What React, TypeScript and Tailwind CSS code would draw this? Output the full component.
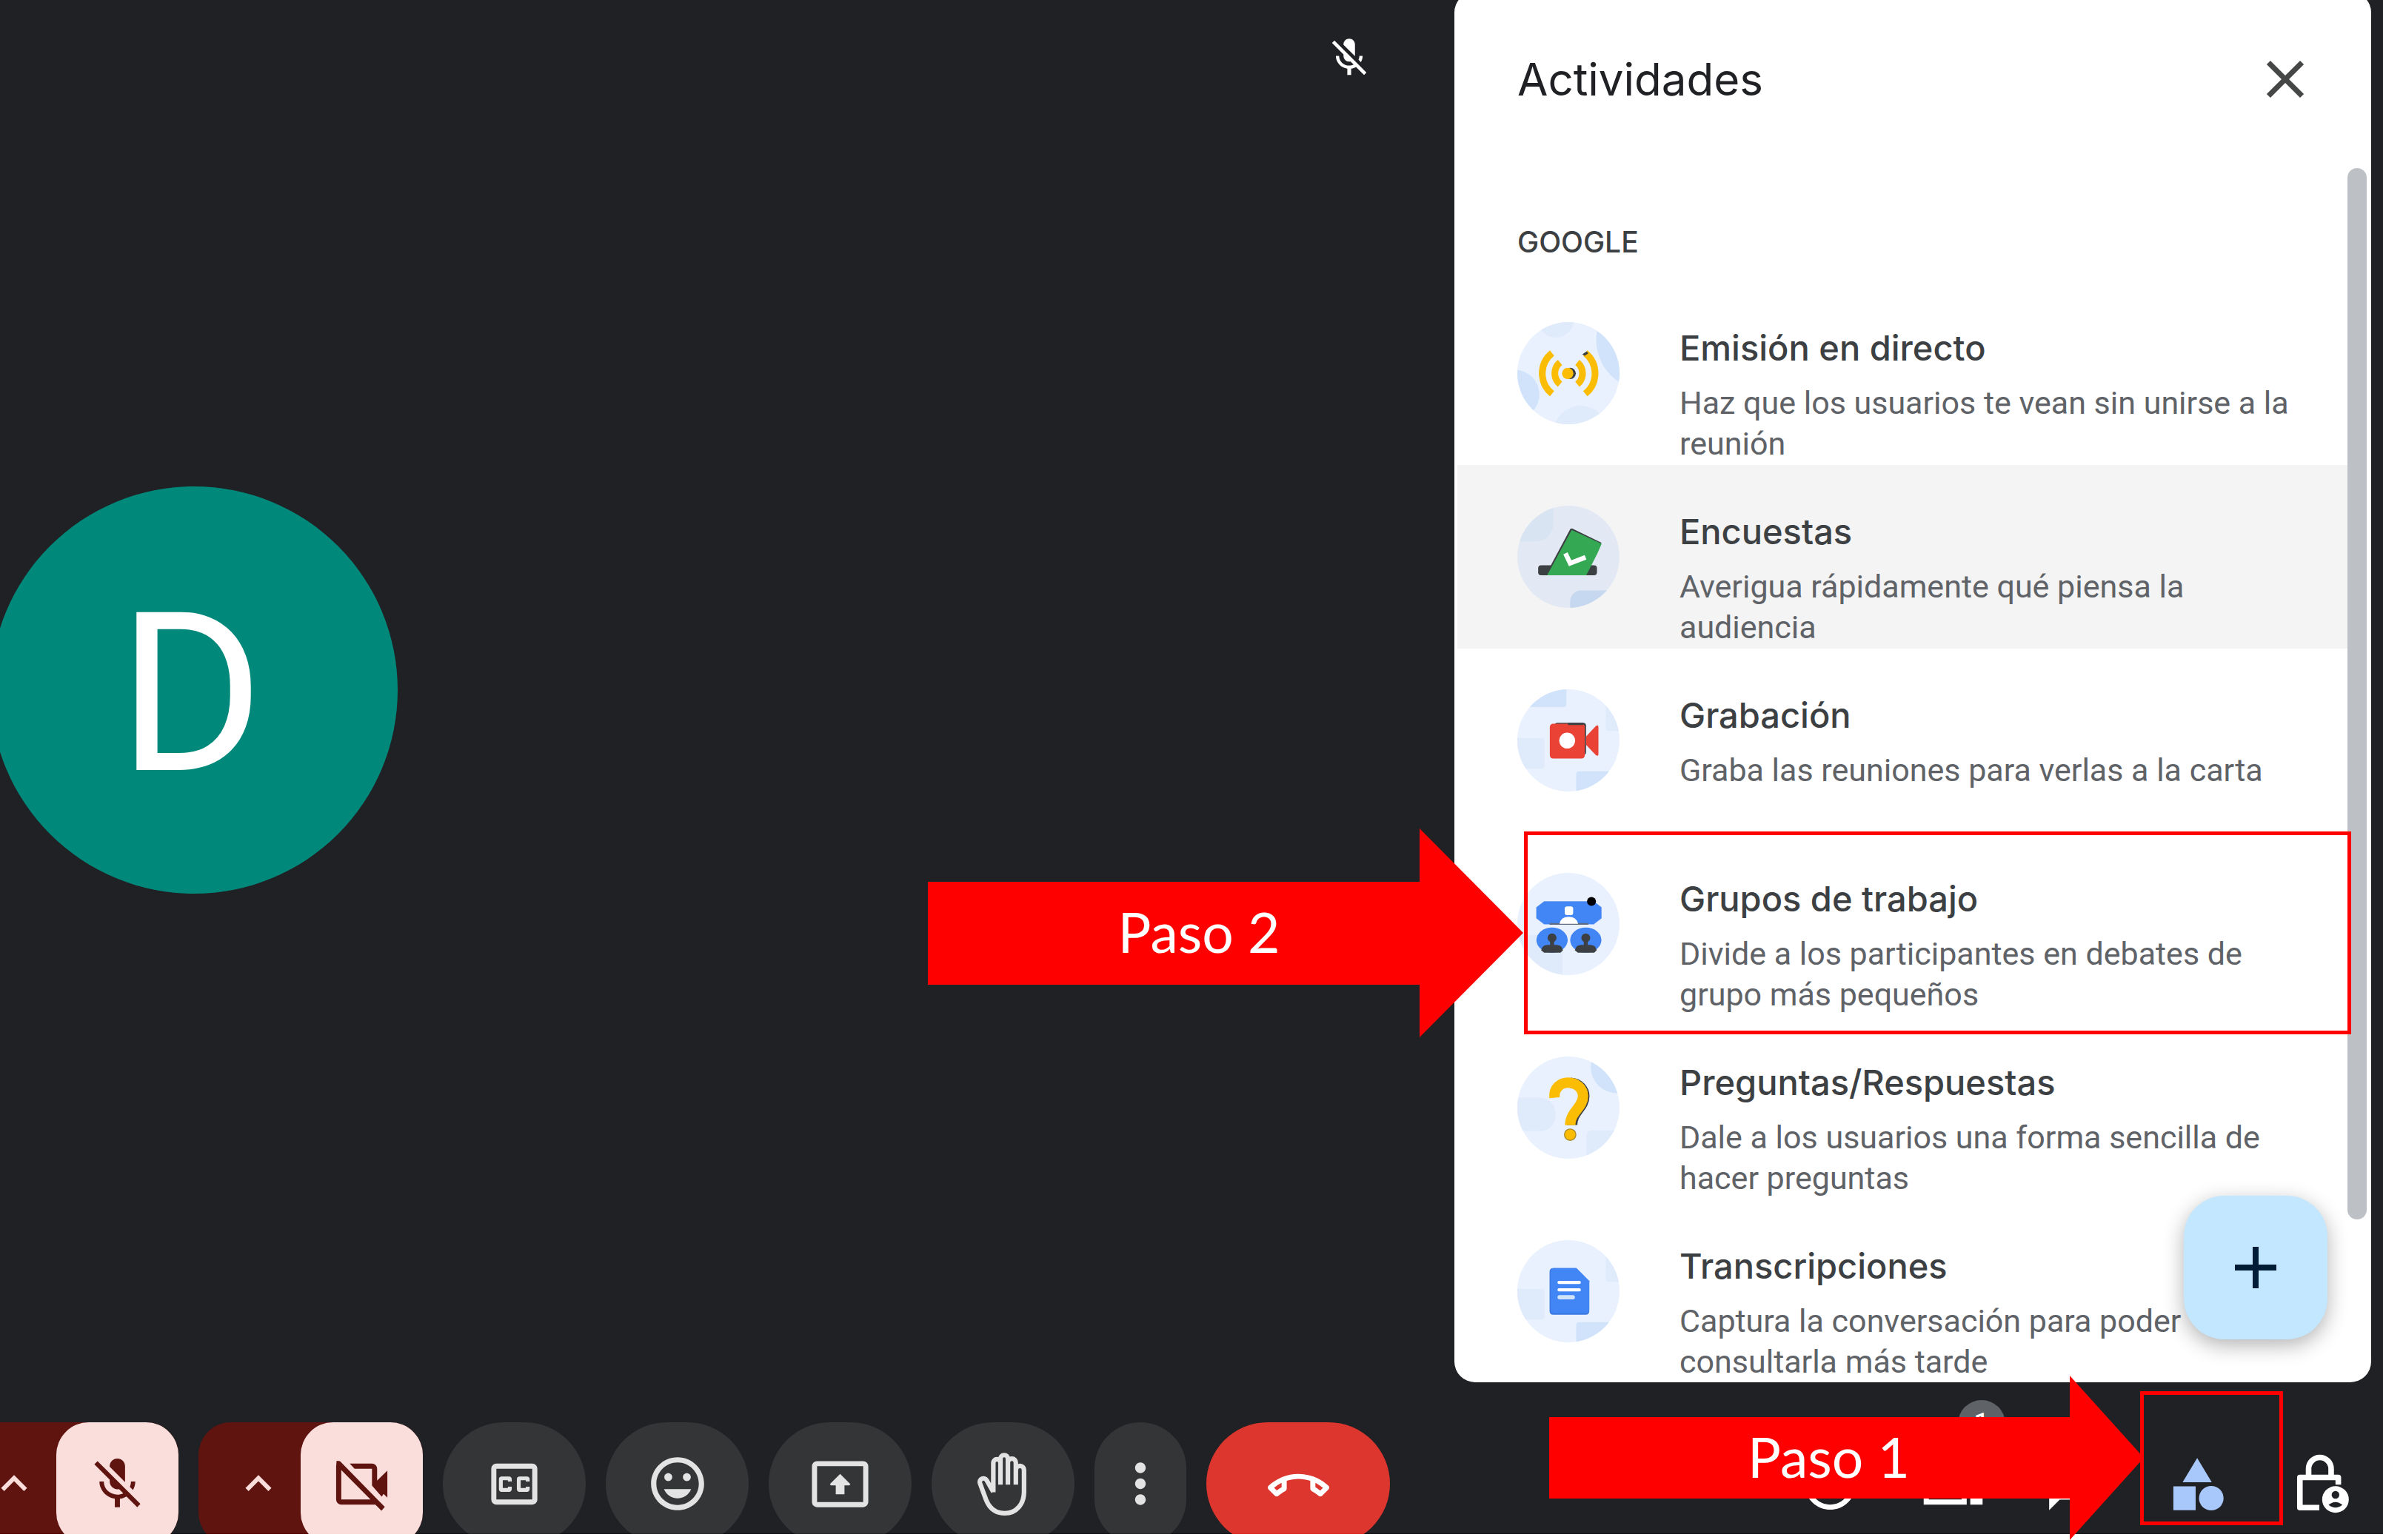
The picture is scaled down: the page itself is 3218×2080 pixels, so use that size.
import type { ReactNode } from "react";
import {
  MdMicOff,
  MdKeyboardArrowUp,
  MdOutlineClosedCaption,
  MdMood,
  MdMoreVert,
  MdClose,
  MdAdd,
  MdOutlineInfo,
  MdOutlineChat,
} from "react-icons/md";

/* ---------- Activity illustrations ---------- */

function Disc({ id, base = "#e9f1fe", children }: { id: string; base?: string; children: ReactNode }) {
  return (
    <svg viewBox="0 0 412 412" className="size-[138px] shrink-0" aria-hidden="true">
      <clipPath id={id}>
        <circle cx="206" cy="206" r="206" />
      </clipPath>
      <g clipPath={`url(#${id})`}>
        <rect width="412" height="412" fill={base} />
        {children}
      </g>
    </svg>
  );
}

function LiveIcon() {
  return (
    <Disc id="disc-live">
      <circle cx="155" cy="-12" r="74" fill="#dfeafb" />
      <circle cx="520" cy="72" r="202" fill="#d0e3fa" />
      <circle cx="-10" cy="292" r="99" fill="#d0e3fa" />
      <circle cx="255" cy="447" r="110" fill="#dfeafb" />
      <g fill="none" stroke="#fbbc04" strokeWidth="27">
        <path d="M140 125a105 105 0 0 0 0 164" />
        <path d="M172 163a57 57 0 0 0 0 88" />
        <path d="M242 163a57 57 0 0 1 0 88" />
        <path d="M274 125a105 105 0 0 1 0 164" />
      </g>
      <path d="M262 130l18-12 6 8-14 10z" fill="#3c4043" />
      <circle cx="213" cy="207" r="23" fill="#3c4043" />
      <circle cx="203" cy="207" r="23" fill="#fbbc04" />
    </Disc>
  );
}

function PollIcon() {
  return (
    <Disc id="disc-poll" base="#e3e9f4">
      <rect x="-60" y="-60" width="205" height="205" rx="70" fill="#d8e4f2" />
      <rect x="213" y="342" width="260" height="160" rx="44" fill="#c6d8f0" />
      <rect x="84" y="240" width="237" height="41" rx="12" fill="#3c4043" />
      <path d="M114 280l100-187 7-1 118 57-4 8-62 123z" fill="#3c4043" />
      <path d="M120 281L219 98l121 56-18 40-44 87z" fill="#34a853" />
      <path d="M194 192l19 40 62-24" fill="none" stroke="#fff" strokeWidth="19" />
    </Disc>
  );
}

function RectBlobs() {
  return (
    <>
      <rect x="357" y="50" width="120" height="118" rx="12" fill="#dfeafb" />
      <rect x="-40" y="197" width="150" height="123" rx="12" fill="#dfeafb" />
      <rect x="237" y="331" width="200" height="120" rx="12" fill="#d0e3fa" />
    </>
  );
}

function RecordIcon() {
  return (
    <Disc id="disc-record">
      <rect x="0" y="-40" width="198" height="112" rx="12" fill="#d0e3fa" />
      <RectBlobs />
      <rect x="150" y="135" width="127" height="130" rx="12" fill="#3c4043" />
      <rect x="131" y="139" width="141" height="140" rx="13" fill="#ea4335" />
      <path d="M204 135h62v9h-62z" fill="#3c4043" />
      <path d="M277 190l40-42q10-6 10 4v110q0 10-10 4l-40-42z" fill="#ea4335" />
      <circle cx="201" cy="207" r="32" fill="#fff" />
    </Disc>
  );
}

function GroupsIcon() {
  return (
    <Disc id="disc-groups">
      <rect x="-20" y="250" width="202" height="190" rx="8" fill="#dfeafb" />
      <path d="M108 115h200l31 24v44l-31 24H108l-31-24v-44z" fill="#4285f4" stroke="#4285f4" strokeLinejoin="round" />
      <path d="M130 202h156v7H130z" fill="#5f6b80" />
      <circle cx="299" cy="115" r="18" fill="#000" />
      <rect x="191" y="135" width="34" height="35" rx="9" fill="#fff" />
      <path d="M170 205q6-28 37-28t38 28z" fill="#fff" />
      {[0, 136].map((dx) => (
        <g key={dx} transform={`translate(${dx} 0)`}>
          <ellipse cx="140" cy="271" rx="63" ry="51" fill="#4285f4" />
          <path d="M132 262h16v36h-16z" fill="#3c4043" />
          <circle cx="140" cy="262" r="18" fill="#3c4043" />
          <path d="M96 312q4-22 26-22h36q22 0 26 22l-10 10h-66z" fill="#3c4043" />
        </g>
      ))}
    </Disc>
  );
}

function QuestionIcon() {
  return (
    <Disc id="disc-question">
      <circle cx="402" cy="42" r="106" fill="#d0e3fa" />
      <rect x="-60" y="166" width="214" height="135" rx="62" fill="#dfeafb" />
      <rect x="279" y="298" width="180" height="160" rx="20" fill="#dfeafb" />
      <g fill="none" strokeWidth="42">
        <path d="M214 106c36 2 56 28 56 54 0 46-49 62-49 116" stroke="#3c4043" />
        <path d="M150 166c-4-40 26-61 54-61 36 0 61 25 61 55 0 46-52 62-52 117" stroke="#fbbc04" />
      </g>
      <circle cx="213" cy="315" r="25" fill="#a98b2c" />
      <circle cx="213" cy="315" r="21" fill="#fbbc04" />
    </Disc>
  );
}

function TranscriptIcon() {
  return (
    <Disc id="disc-transcript">
      <RectBlobs />
      <path d="M145 113h93l52 52v121q0 15-15 15H145q-15 0-15-15V128q0-15 15-15z" fill="#3b78e0" />
      <path d="M147 113h91l52 52v114q0 15-15 15H147q-13 0-13-15V128q0-15 13-15z" fill="#4285f4" />
      <rect x="162" y="164" width="94" height="13" rx="6" fill="#fff" />
      <rect x="162" y="194" width="94" height="13" rx="6" fill="#fff" />
      <rect x="162" y="222" width="70" height="17" rx="8" fill="#d0e3fa" />
    </Disc>
  );
}

/* ---------- Toolbar icons ---------- */

function VideoOffIcon() {
  return (
    <svg viewBox="0 0 24 24" className="size-[83px]" fill="currentColor" aria-hidden="true">
      <path d="M7.3 4H16a2 2 0 0 1 2 2v4.6l4-3.9v10.6l-1.5-1.5-.7 1.1L16 12.6V6H9.2z" />
      <path d="M2.2 2.9L3.5 3 21 20.9l-1.3 1.5-2.4-2.4H4a2 2 0 0 1-2-2V5zM4 6.5V18h11.4z" fillRule="evenodd" />
    </svg>
  );
}

function PresentIcon() {
  return (
    <svg viewBox="0 0 24 24" className="size-[83px]" fill="currentColor" aria-hidden="true">
      <path d="M21 3H3a2 2 0 0 0-2 2v14c0 1.1.9 2 2 2h18a2 2 0 0 0 2-2V5a2 2 0 0 0-2-2zm0 16H3V5h18v14zM10.3 12.5H8.4L8 12l4-4 4 4-.4.5h-1.9V16h-3.4z" />
    </svg>
  );
}

function HandIcon() {
  return (
    <svg
      viewBox="0 0 24 24"
      className="size-[83px] overflow-visible"
      fill="none"
      stroke="currentColor"
      strokeWidth="1.8"
      strokeLinejoin="round"
      aria-hidden="true"
    >
      <path d="M8.2 15.2V3.7a1.4 1.4 0 0 1 2.8 0M11 12.2V2.1a1.4 1.4 0 0 1 2.9 0v10.1M13.9 3.6a1.5 1.5 0 0 1 3.1 0v8.6M17 6.5a1.5 1.5 0 0 1 3.2 0V15c0 4.800-3 8.400-7.500 8.400-3.600 0-6-2-7.300-5.200L3 11.700c-.5-1.700 1.600-2.700 2.600-1.200l2.600 4.500" />
    </svg>
  );
}

function HangUpIcon() {
  return (
    <svg viewBox="0 -1 24 24" className="size-[83px]" fill="currentColor" aria-hidden="true">
      <path d="M18.590 10.520c1.050.51 2.040 1.150 2.960 1.910l-1.070 1.070c-.58-.47-1.210-.89-1.880-1.270v-1.710m-13.200 0v1.700c-.65.37-1.280.79-1.870 1.270l-1.070-1.070c.91-.75 1.900-1.380 2.940-1.900M12 7C7.460 7 3.340 8.780.29 11.670c-.18.18-.29.43-.29.71s.11.53.29.7l2.480 2.480c.18.18.43.29.71.29.27 0 .52-.1.7-.28.79-.73 1.680-1.360 2.660-1.850.33-.16.56-.51.56-.9v-3.100C8.850 9.250 10.400 9 12 9s3.150.25 4.590.73v3.100c0 .4.23.74.56.9.98.49 1.880 1.110 2.670 1.850.18.17.43.28.7.28.28 0 .53-.11.71-.29l2.480-2.480c.18-.18.29-.43.29-.71s-.11-.53-.29-.71C20.660 8.780 16.540 7 12 7z" />
    </svg>
  );
}

function PeopleIcon() {
  return (
    <svg viewBox="0 0 24 24" className="size-[83px]" fill="currentColor" aria-hidden="true">
      <path d="M9 12a4 4 0 1 0 0-8 4 4 0 0 0 0 8zm0-2a2 2 0 1 1 0-4 2 2 0 0 1 0 4zM.5 20v-3.500C.5 14.200 6 13 9 13s8.300 1.200 8.300 3.500V20zm2-2h12.800v-1.500C15 16 11.700 15 9 15s-6.500 1-6.500 1.500z" fillRule="evenodd" />
      <path d="M15 12a4 4 0 0 0 0-8M18.700 20v-3.500c0-1.300-.8-2.300-2-3 3.300.4 6.800 1.300 6.800 3V20z" />
    </svg>
  );
}

function ShapesIcon() {
  return (
    <svg viewBox="0 0 24 24" className="size-[83px]" fill="#a8c7fa" aria-hidden="true">
      <path d="M11.300 1.800l5.700 9.500H5.600zM2 12.900h8.700v9.300H2z" />
      <circle cx="16.800" cy="17.500" r="4.800" />
    </svg>
  );
}

function LockClockIcon() {
  return (
    <svg viewBox="0 0 24 24" className="size-[83px] overflow-visible" fill="none" stroke="currentColor" aria-hidden="true">
      <path strokeWidth="2.2" d="M6.800 9V6a4.400 4.400 0 0 1 8.800 0v3" />
      <path strokeWidth="2.2" strokeLinejoin="round" d="M11 21.200H3.400V9.400h15v2.800" />
      <circle cx="17.300" cy="18" r="5.200" fill="currentColor" stroke="none" />
      <circle cx="17.300" cy="16.200" r="1.500" fill="#202124" stroke="none" />
      <path fill="#202124" stroke="none" d="M14.600 20.100q2.700-2.200 5.400 0-2.700 2.200-5.400 0z" />
    </svg>
  );
}

/* ---------- Building blocks ---------- */

const activities = [
  { title: "Emisión en directo", text: "Haz que los usuarios te vean sin unirse a la reunión", icon: <LiveIcon /> },
  { title: "Encuestas", text: "Averigua rápidamente qué piensa la audiencia", icon: <PollIcon />, active: true },
  { title: "Grabación", text: "Graba las reuniones para verlas a la carta", icon: <RecordIcon /> },
  { title: "Grupos de trabajo", text: "Divide a los participantes en debates de grupo más pequeños", icon: <GroupsIcon /> },
  { title: "Preguntas/Respuestas", text: "Dale a los usuarios una forma sencilla de hacer preguntas", icon: <QuestionIcon /> },
  { title: "Transcripciones", text: "Captura la conversación para poder consultarla más tarde", icon: <TranscriptIcon /> },
];

function SplitControl({ label, optionsLabel, children }: { label: string; optionsLabel: string; children: ReactNode }) {
  return (
    <div className="flex h-[166px] shrink-0 rounded-[44px] bg-[#601410]">
      <button type="button" aria-label={optionsLabel} className="flex w-[138px] items-center justify-center pl-6 text-[#f9dedc]">
        <MdKeyboardArrowUp className="size-[70px]" />
      </button>
      <button type="button" aria-label={label} className="flex w-[165px] items-center justify-center rounded-[44px] bg-[#f9dedc] text-[#601410]">
        {children}
      </button>
    </div>
  );
}

function RoundControl({ label, width = "w-[193px]", color = "bg-[#333537] text-[#e3e3e3]", children }: { label: string; width?: string; color?: string; children: ReactNode }) {
  return (
    <button type="button" aria-label={label} className={`flex h-[166px] shrink-0 items-center justify-center rounded-full ${width} ${color}`}>
      {children}
    </button>
  );
}

function SideControl({ label, children }: { label: string; children: ReactNode }) {
  return (
    <button type="button" aria-label={label} className="relative flex size-[166px] items-center justify-center text-white">
      {children}
    </button>
  );
}

function StepArrow({ text, place, body, head }: { text: string; place: string; body: string; head: string }) {
  return (
    <div className={`absolute flex items-center ${place}`}>
      <div className={`flex items-center justify-center bg-[#ff0000] pb-1 font-['Lato',sans-serif] text-[75px] leading-none text-white ${body}`}>
        {text}
      </div>
      <svg viewBox="0 0 100 100" preserveAspectRatio="none" className={head} aria-hidden="true">
        <path d="M0 0L100 50 0 100z" fill="#ff0000" />
      </svg>
    </div>
  );
}

export default function App() {
  return (
    <div className="relative flex h-screen flex-col overflow-hidden bg-white pb-2 font-['Roboto',sans-serif]">
      <div className="flex min-h-0 flex-1 bg-[#202124] pr-4">
        <main className="relative flex flex-1 items-center pb-1">
          <div className="-ml-[13px] flex size-[550px] items-center justify-center rounded-full bg-[#00897b] pt-3 pr-2 text-[300px] leading-none text-white">
            D
          </div>
          <MdMicOff className="absolute top-[47px] right-[111px] size-[62px] text-white" />
        </main>

        <aside className="relative -mt-[11px] flex w-[1238px] flex-col overflow-hidden rounded-[28px] bg-white">
          <header className="flex h-[236px] shrink-0 items-center justify-between pr-[73px] pl-[85px]">
            <h1 className="font-['Inter',sans-serif] text-[60px] leading-none text-[#202124]">Actividades</h1>
            <button type="button" aria-label="Cerrar" className="text-[#444746]">
              <MdClose className="size-[86px]" />
            </button>
          </header>
          <div className="flex min-h-0 flex-1">
            <section className="ml-1 flex-1">
              <h2 className="h-[155px] pt-[79px] pl-[81px] font-['Inter',sans-serif] text-[39px] leading-[46px] font-medium text-[#3c4043]">
                GOOGLE
              </h2>
              <ul>
                {activities.map((a) => (
                  <li key={a.title}>
                    <button
                      type="button"
                      className={`flex h-[248px] w-full items-start gap-[81px] pt-[55px] pr-[55px] pl-[81px] text-left ${a.active ? "bg-[#f4f4f4]" : ""}`}
                    >
                      {a.icon}
                      <span className="flex flex-col gap-3">
                        <span className="font-['Inter',sans-serif] text-[47px] leading-[70px] font-medium text-[#3c4043]">{a.title}</span>
                        <span className="text-[43px] leading-[55px] text-[#5f6368]">{a.text}</span>
                      </span>
                    </button>
                  </li>
                ))}
              </ul>
            </section>
            <div className="mt-0.5 mr-1.5 h-[1420px] w-[26px] rounded-full bg-[#bdc1c6]" />
          </div>
          <button
            type="button"
            aria-label="Añadir"
            className="absolute right-[59px] bottom-[58px] flex size-[194px] items-center justify-center rounded-[55px] bg-[#c2e7ff] text-[#001d35] shadow-[0_8px_28px_rgba(0,0,0,0.3)]"
          >
            <MdAdd className="size-[96px]" />
          </button>
        </aside>
      </div>

      <footer className="flex h-[205px] shrink-0 items-start justify-between overflow-hidden bg-[#202124]">
        <div className="-ml-[62px] flex gap-[27px] pt-[54px]">
          <SplitControl label="Activar micrófono" optionsLabel="Opciones de audio">
            <MdMicOff className="size-[83px]" />
          </SplitControl>
          <SplitControl label="Activar cámara" optionsLabel="Opciones de vídeo">
            <VideoOffIcon />
          </SplitControl>
          <RoundControl label="Subtítulos">
            <MdOutlineClosedCaption className="size-[83px]" />
          </RoundControl>
          <RoundControl label="Enviar una reacción">
            <MdMood className="size-[86px]" />
          </RoundControl>
          <RoundControl label="Presentar ahora">
            <PresentIcon />
          </RoundControl>
          <RoundControl label="Levantar la mano">
            <HandIcon />
          </RoundControl>
          <RoundControl label="Más opciones" width="w-[124px]">
            <MdMoreVert className="size-[86px]" />
          </RoundControl>
          <RoundControl label="Salir de la llamada" width="w-[248px]" color="bg-[#dc362e] text-white">
            <HangUpIcon />
          </RoundControl>
        </div>
        <div className="flex pt-[54px]">
          <SideControl label="Detalles de la reunión">
            <MdOutlineInfo className="size-[83px]" />
          </SideControl>
          <SideControl label="Personas">
            <PeopleIcon />
            <span className="absolute -top-[30px] right-3 flex size-16 items-center justify-center rounded-full bg-[#5f6368] text-[38px] leading-none">
              1
            </span>
          </SideControl>
          <SideControl label="Chat">
            <MdOutlineChat className="size-[86px]" />
          </SideControl>
          <SideControl label="Actividades">
            <ShapesIcon />
          </SideControl>
          <SideControl label="Controles del organizador">
            <LockClockIcon />
          </SideControl>
        </div>
      </footer>

      <div className="pointer-events-none absolute top-[1123px] right-[43px] h-[274px] w-[1117px] border-5 border-[#ff0000]" />
      <StepArrow text="Paso 2" place="top-[1119px] right-[1161px]" body="h-[139px] w-[664px] pl-[68px]" head="h-[282px] w-[140px]" />
      <div className="pointer-events-none absolute right-[135px] bottom-5 h-[181px] w-[193px] border-5 border-[#ff0000]" />
      <StepArrow text="Paso 1" place="right-[323px] bottom-0" body="h-[110px] w-[703px] pl-[52px]" head="h-[222px] w-[100px]" />
    </div>
  );
}
